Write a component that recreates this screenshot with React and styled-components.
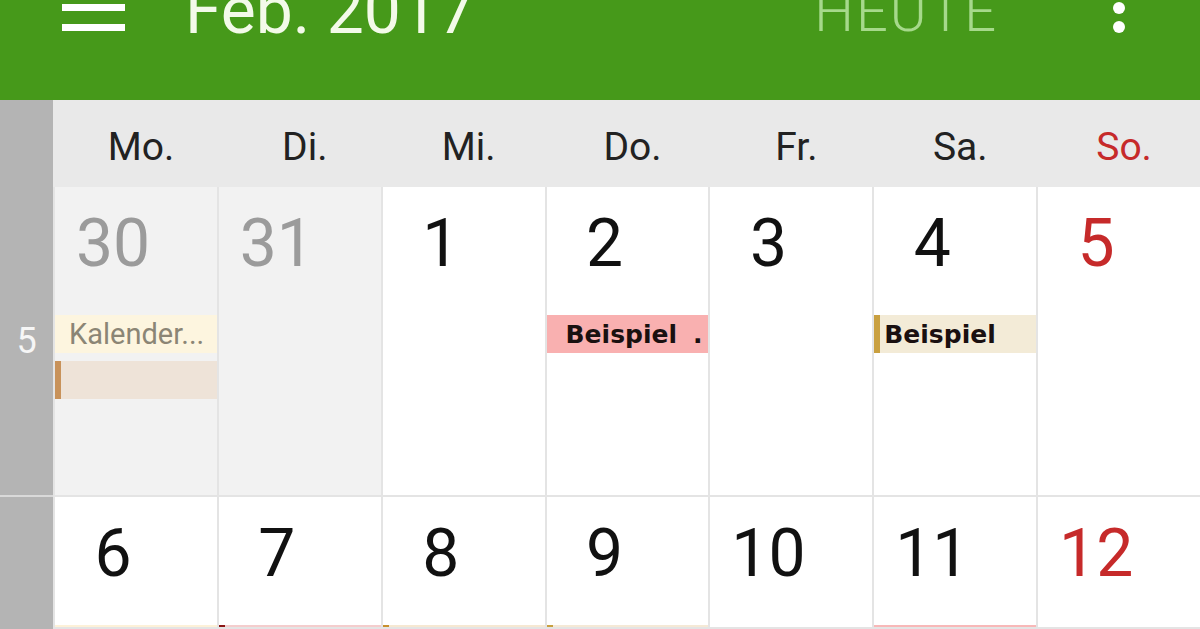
import React from "react";
import styled, { createGlobalStyle } from "styled-components";

const GlobalStyle = createGlobalStyle`
  html, body {
    margin: 0;
    padding: 0;
    height: 100%;
    overflow: hidden;
    background: #ffffff;
  }
  body {
    font-family: Roboto, "Noto Sans", sans-serif;
  }
`;

// ===========> TOOLBAR
const Toolbar = styled.header`
  height: 100px;
  background-color: #46991a;
  display: flex;
  align-items: flex-start;
  padding: 0 74px 0 62px;
  overflow: hidden;
  box-sizing: border-box;
`;

const MenuIcon = styled.svg`
  margin-top: -16px;
  flex-shrink: 0;
`;

const Title = styled.h1`
  margin: -22px 0 0 60px;
  font-size: 66px;
  line-height: 66px;
  font-weight: 400;
  color: #f3fae9;
  white-space: nowrap;
`;

const TodayButton = styled.span`
  margin: -16px 0 0 auto;
  font-size: 56px;
  line-height: 56px;
  font-weight: 300;
  letter-spacing: 2px;
  color: #a6d98b;
`;

const MoreIcon = styled.svg`
  margin: -17px 0 0 114px;
  flex-shrink: 0;
`;

// ===========> CALENDAR GRID
const Grid = styled.div`
  display: grid;
  grid-template-columns: 53px repeat(7, 1fr);
  grid-template-rows: 87px 310px 1fr;
  height: 529px;
`;

const Gutter = styled.div`
  background-color: #b4b4b4;
  color: #f6f6f6;
  font-size: 36px;
  display: flex;
  align-items: center;
  justify-content: center;
  box-sizing: border-box;
  border-bottom: ${(p) => (p.$line ? "2px solid #d9d9d9" : "none")};
`;

const DayLabel = styled.div`
  background-color: #e9e9e9;
  display: flex;
  align-items: center;
  justify-content: center;
  padding: 6px 0 0 12px;
  font-size: 39px;
  color: ${(p) => (p.$sunday ? "#c62a2a" : "#222222")};
`;

const DayCell = styled.div`
  background-color: ${(p) => (p.$outside ? "#f2f2f2" : "#ffffff")};
  border-left: 2px solid #e4e4e4;
  border-bottom: 2px solid #e4e4e4;
  display: flex;
  flex-direction: column;
  overflow: hidden;
  min-width: 0;
`;

const DayNumber = styled.div`
  width: 116px;
  padding-top: 24px;
  text-align: center;
  font-size: 66px;
  line-height: 66px;
  color: ${(p) => (p.$outside ? "#9b9b9b" : p.$sunday ? "#c62a2a" : "#111111")};
`;

const Events = styled.div`
  margin-top: 38px;
  display: flex;
  flex-direction: column;
  gap: 8px;
`;

const Event = styled.div`
  height: 38px;
  box-sizing: border-box;
  display: flex;
  align-items: center;
  justify-content: space-between;
  background-color: ${(p) => p.$bg};
  border-left: ${(p) => (p.$bar ? `6px solid ${p.$bar}` : "none")};
  padding: 0 6px 0 ${(p) => p.$pad}px;
  white-space: nowrap;
  overflow: hidden;
  ${(p) =>
    p.$soft
      ? `
    font-family: Roboto, "Noto Sans", sans-serif;
    font-size: 29px;
    color: #8b8575;
  `
      : `
    font-family: "DejaVu Sans", Verdana, sans-serif;
    font-size: 25px;
    font-weight: 700;
    color: #1a1010;
  `}
`;

const weekdays = ["Mo.", "Di.", "Mi.", "Do.", "Fr.", "Sa.", "So."];

const weeks = [
  {
    number: "5",
    days: [
      { day: 30, outside: true, events: [
        { title: "Kalender...", bg: "#fdf5df", pad: 14, soft: true },
        { title: "", bg: "#eee3d8", bar: "#c8925a", pad: 8 },
      ] },
      { day: 31, outside: true, events: [] },
      { day: 1, events: [] },
      { day: 2, events: [{ title: "Beispiel", tail: ".", bg: "#f9b0b0", pad: 19 }] },
      { day: 3, events: [] },
      { day: 4, events: [{ title: "Beispiel", bg: "#f3ebd7", bar: "#c9a040", pad: 4 }] },
      { day: 5, events: [] },
    ],
  },
  {
    number: "6",
    days: [
      { day: 6, events: [{ title: "", bg: "#fdf1d8", pad: 14 }] },
      { day: 7, events: [{ title: "", bg: "#f4cdcd", bar: "#8b1616", pad: 8 }] },
      { day: 8, events: [{ title: "", bg: "#f6e8d2", bar: "#c8902e", pad: 8 }] },
      { day: 9, events: [{ title: "", bg: "#f5e9d6", bar: "#c8a040", pad: 8 }] },
      { day: 10, events: [] },
      { day: 11, events: [{ title: "", bg: "#f8b8b8", pad: 8 }] },
      { day: 12, events: [] },
    ],
  },
];

const App = () => {
  return (
    <>
      <GlobalStyle />

      {/* top bar */}
      <Toolbar>
        <MenuIcon width="63" height="47" viewBox="0 0 63 47">
          <rect x="0" y="0" width="63" height="7" fill="#ffffff" />
          <rect x="0" y="20" width="63" height="7" fill="#ffffff" />
          <rect x="0" y="40" width="63" height="7" fill="#ffffff" />
        </MenuIcon>
        <Title>Feb. 2017</Title>
        <TodayButton>HEUTE</TodayButton>
        <MoreIcon width="14" height="52" viewBox="0 0 14 52">
          <circle cx="7" cy="6" r="6" fill="#ffffff" />
          <circle cx="7" cy="25" r="6" fill="#ffffff" />
          <circle cx="7" cy="44" r="6" fill="#ffffff" />
        </MoreIcon>
      </Toolbar>

      {/* month grid */}
      <Grid>
        <Gutter />
        {weekdays.map((d, i) => (
          <DayLabel key={d} $sunday={i === 6}>{d}</DayLabel>
        ))}

        {weeks.map((week, w) => (
          <React.Fragment key={week.number}>
            <Gutter $line={w === 0}>{w === 0 ? week.number : ""}</Gutter>
            {week.days.map((d, i) => (
              <DayCell key={d.day} $outside={d.outside}>
                <DayNumber $outside={d.outside} $sunday={i === 6}>{d.day}</DayNumber>
                <Events>
                  {d.events.map((e, k) => (
                    <Event key={k} $bg={e.bg} $bar={e.bar} $pad={e.pad} $soft={e.soft}>
                      <span>{e.title}</span>
                      {e.tail && <span>{e.tail}</span>}
                    </Event>
                  ))}
                </Events>
              </DayCell>
            ))}
          </React.Fragment>
        ))}
      </Grid>
    </>
  );
};

export default App;
